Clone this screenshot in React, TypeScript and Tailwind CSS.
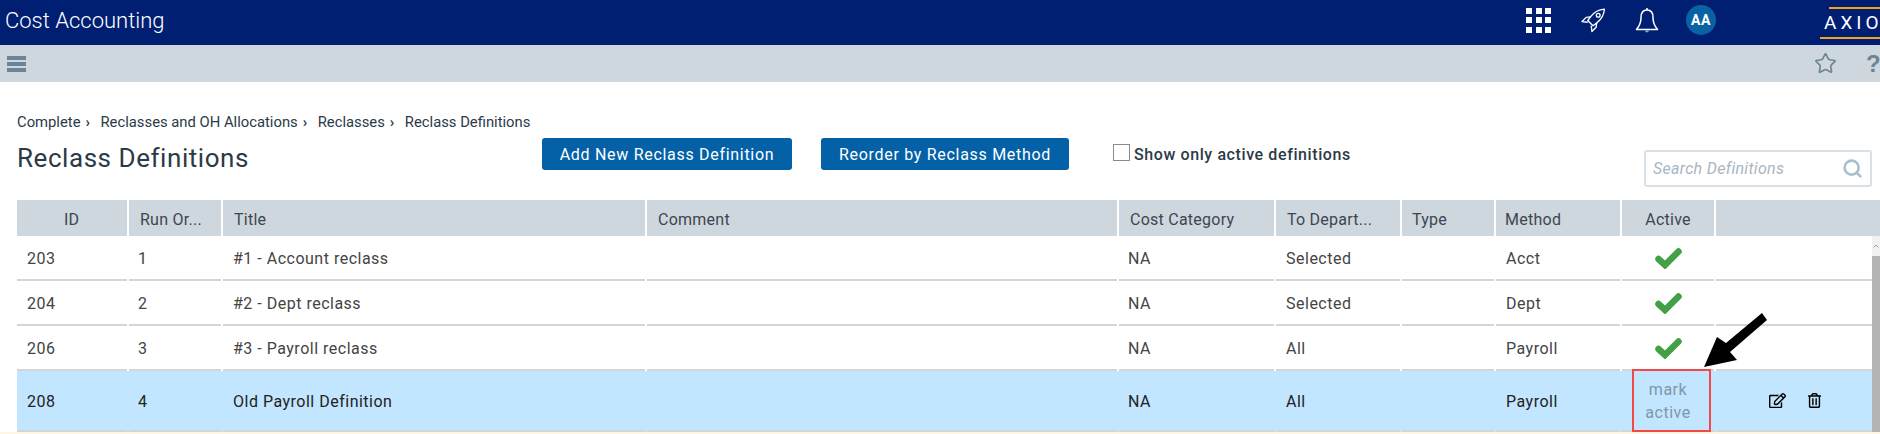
import { FaRegEdit, FaRegTrashAlt } from 'react-icons/fa';
import { Search, Star } from 'lucide-react';

type Row = {
  id: string;
  order: string;
  title: string;
  to: string;
  method: string;
  active: boolean;
};

const rows: Row[] = [
  { id: '203', order: '1', title: '#1 - Account reclass', to: 'Selected', method: 'Acct', active: true },
  { id: '204', order: '2', title: '#2 - Dept reclass', to: 'Selected', method: 'Dept', active: true },
  { id: '206', order: '3', title: '#3 - Payroll reclass', to: 'All', method: 'Payroll', active: true },
  { id: '208', order: '4', title: 'Old Payroll Definition', to: 'All', method: 'Payroll', active: false },
];

const Check = () => (
  <svg width="27" height="21" viewBox="0 0 27 21" aria-hidden="true">
    <path d="M3.5 11 L10 17 L23.5 3.5" fill="none" stroke="#43a047" strokeWidth="6.5" strokeLinejoin="miter" strokeLinecap="round" />
  </svg>
);

const Grid = () => (
  <div className="grid grid-cols-3 gap-x-[3.5px] gap-y-[3.5px] w-[25px]">
    {Array.from({ length: 9 }).map((_, i) => (
      <span key={i} className="w-[6px] h-[6px] bg-white" />
    ))}
  </div>
);

const RocketIcon = () => (
  <svg width="25" height="26" viewBox="0 0 24 24" fill="none" stroke="#fff" strokeWidth="1.3" strokeLinejoin="round" aria-hidden="true">
    <path d="M22.5 1.5 C16.5 2 12.5 4.5 9.5 8.5 L6.5 12.5 L11.5 17.5 L15.5 14.5 C19.5 11.5 22 7.5 22.5 1.5 Z" />
    <circle cx="16.5" cy="7.5" r="1.8" />
    <path d="M9.2 9 L5 9.5 L1 13.5 L6.5 14.2" />
    <path d="M15 15 L14.5 19 L10.5 23 L9.8 17.5" />
  </svg>
);

const BellIcon = () => (
  <svg width="24" height="27" viewBox="0 0 24 27" fill="none" stroke="#fff" strokeWidth="1.5" strokeLinejoin="round" aria-hidden="true">
    <path d="M12 1 V3" />
    <path d="M12 3 C7.5 3 6 6.5 6 10.5 C6 16 4 19.5 1.5 22.5 L22.5 22.5 C20 19.5 18 16 18 10.5 C18 6.5 16.5 3 12 3 Z" />
    <path d="M10 23.5 C10.5 26 13.5 26 14 23.5 Z" fill="#7fb2dc" stroke="none" />
  </svg>
);

const HeaderCell = ({ label, className }: { label?: string; className: string }) => (
  <div className={`h-full bg-[#cfd7de] flex items-center pt-[3px] text-[16px] tracking-[0.25px] text-[#3c4650] ${className}`}>{label}</div>
);

const Sep = () => <span className="w-[20px] pl-[5px] text-[15px] font-bold">›</span>;

export default function App() {
  return (
    <div className="relative w-[1880px] h-[434px] overflow-hidden bg-white font-['Roboto',sans-serif]">
      <header className="h-[45px] bg-[#001e72] flex items-center pb-[5px] text-white">
        <div className="pl-[5px] text-[22px] font-light flex-1">Cost Accounting</div>
        <Grid />
        <div className="ml-[30px]">
          <RocketIcon />
        </div>
        <div className="ml-[29px]">
          <BellIcon />
        </div>
        <div className="ml-[27px] w-[30px] h-[30px] rounded-full bg-[#0a62a5] flex items-center justify-center text-[14px] font-bold tracking-[0.5px]">
          AA
        </div>
        <div className="ml-[104px] w-[60px] h-[32px] mt-[5px] shrink-0 overflow-hidden flex flex-col items-end">
          <div className="w-[51px] h-[2px] bg-[#f5a31a]" />
          <div className="w-[60px] h-[28px] pl-[4px] overflow-hidden text-[19px] leading-[28px] tracking-[4px] whitespace-nowrap">AXIOM</div>
          <div className="w-[60px] h-[2px] bg-[#f5a31a]" />
        </div>
      </header>

      <div className="h-[37px] bg-[#cfd7de] flex items-center pl-[7px] text-[#6b8595]">
        <div className="flex flex-col gap-[2px] flex-1">
          <span className="block w-[19px] h-[4px] bg-[#6b8595]" />
          <span className="block w-[19px] h-[4px] bg-[#6b8595]" />
          <span className="block w-[19px] h-[4px] bg-[#6b8595]" />
        </div>
        <Star size={23} strokeWidth={1.75} />
        <span className="ml-[29px] w-[14px] overflow-hidden text-[24px] leading-[28px] font-bold font-['Liberation_Sans',sans-serif]">?</span>
      </div>

      <div className="pl-[17px] pr-[8px] pt-[31px] h-[118px]">
        <div className="text-[14.8px] leading-[18px] text-[#2b3a47] flex">
          <span>Complete</span>
          <Sep />
          <span>Reclasses and OH Allocations</span>
          <Sep />
          <span>Reclasses</span>
          <Sep />
          <span>Reclass Definitions</span>
        </div>
        <div className="flex items-start">
          <h1 className="w-[525px] mt-[11px] text-[26px] leading-[32px] text-[#2b3a47] tracking-[0.55px]">Reclass Definitions</h1>
          <button type="button" className="w-[250px] h-[32px] mt-[7px] pt-[1px] rounded-[3px] bg-[#0461a8] text-white text-[16px] tracking-[0.7px]">
            Add New Reclass Definition
          </button>
          <button type="button" className="ml-[29px] w-[248px] h-[32px] mt-[7px] pt-[1px] rounded-[3px] bg-[#0461a8] text-white text-[16px] tracking-[0.7px]">
            Reorder by Reclass Method
          </button>
          <label className="ml-[44px] mt-[13px] flex-1 flex items-center text-[16px] leading-[20px] font-medium tracking-[0.6px] text-[#2b3a47]">
            <span className="w-[17px] h-[17px] mr-[4px] mb-[4px] border border-[#8a8a8a] bg-white" />
            Show only active definitions
          </label>
          <div className="mt-[19px] w-[228px] h-[37px] border-2 border-[#d9e1e8] rounded-[3px] flex items-center justify-between pl-[7px] pr-[7px] text-[16px] tracking-[0.3px] italic text-[#a9b6c1]">
            Search Definitions
            <Search size={21} strokeWidth={3} className="text-[#a9c0cc]" />
          </div>
        </div>
      </div>

      <div className="ml-[17px] h-[36px] flex gap-[2px]">
        <HeaderCell label="ID" className="w-[110px] pl-[47px]" />
        <HeaderCell label="Run Or..." className="w-[92px] pl-[11px]" />
        <HeaderCell label="Title" className="w-[422px] pl-[11px]" />
        <HeaderCell label="Comment" className="w-[470px] pl-[11px]" />
        <HeaderCell label="Cost Category" className="w-[155px] pl-[11px]" />
        <HeaderCell label="To Depart..." className="w-[124px] pl-[11px]" />
        <HeaderCell label="Type" className="w-[92px] pl-[10px]" />
        <HeaderCell label="Method" className="w-[124px] pl-[9px]" />
        <HeaderCell label="Active" className="w-[92px] justify-center" />
        <HeaderCell className="flex-1" />
      </div>

      <div className="relative">
        {rows.map((row) => (
          <div
            key={row.id}
            className={`ml-[17px] mr-[8px] flex gap-[2px] text-[16px] tracking-[0.5px] ${
              row.active ? 'h-[45px] text-[#444]' : 'h-[61px] bg-[#c2e6ff] text-[#222]'
            }`}
          >
            <div className="w-[110px] pl-[10px] pt-[3px] flex items-center border-b-2 border-[#d2d6d9]">{row.id}</div>
            <div className="w-[92px] pl-[9px] pt-[3px] flex items-center border-b-2 border-[#d2d6d9]">{row.order}</div>
            <div className="w-[422px] pl-[10px] pt-[3px] flex items-center border-b-2 border-[#d2d6d9]">{row.title}</div>
            <div className="w-[470px] border-b-2 border-[#d2d6d9]" />
            <div className="w-[155px] pl-[9px] pt-[3px] flex items-center border-b-2 border-[#d2d6d9]">NA</div>
            <div className="w-[124px] pl-[10px] pt-[3px] flex items-center border-b-2 border-[#d2d6d9]">{row.to}</div>
            <div className="w-[92px] border-b-2 border-[#d2d6d9]" />
            <div className="w-[124px] pl-[10px] pt-[3px] flex items-center border-b-2 border-[#d2d6d9]">{row.method}</div>
            <div className={`w-[92px] flex flex-col items-center justify-center border-b-2 border-[#d2d6d9] ${row.active ? 'pt-[2px]' : ''}`}>
              {row.active ? (
                <Check />
              ) : (
                <span className="text-[16px] leading-[23px] text-center text-[#7f97a8]">
                  mark
                  <br />
                  active
                </span>
              )}
            </div>
            <div className="flex-1 flex items-center pl-[53px] gap-[21px] text-black border-b-2 border-[#d2d6d9]">
              {!row.active && (
                <>
                  <FaRegEdit size={17} />
                  <FaRegTrashAlt size={15} />
                </>
              )}
            </div>
          </div>
        ))}
        <div className="absolute right-0 top-0 w-[8px] h-[198px] bg-[#b4b4b4]">
          <div className="h-[20px] bg-[#f1f1f1] flex justify-center pt-[8px]">
            <svg width="6" height="4" viewBox="0 0 6 4" aria-hidden="true">
              <path d="M0.5 3.5 L3 1 L5.5 3.5" fill="none" stroke="#a0a0a0" strokeWidth="1" />
            </svg>
          </div>
        </div>
      </div>

      <div className="absolute left-[1632px] top-[369px] w-[79px] h-[63px] border-2 border-[#f44848]" />
      <svg className="absolute left-[1700px] top-[310px]" width="70" height="62" viewBox="0 0 70 62" aria-hidden="true">
        <path d="M4 57 L17 27 L26 33 L62 3 L67 10 L30 42 L37 50 Z" fill="#000" />
      </svg>
      <div className="absolute left-0 right-0 top-[432px] h-[2px] bg-[#fdf6e3]" />
    </div>
  );
}
